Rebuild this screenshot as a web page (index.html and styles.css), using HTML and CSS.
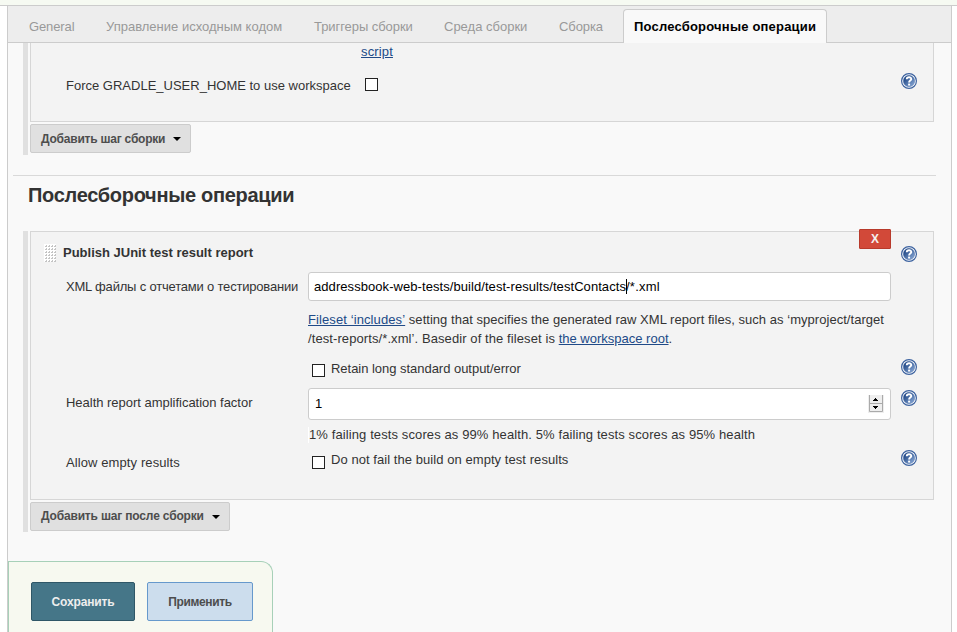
FILE: index.html
```html
<!DOCTYPE html>
<html lang="ru">
<head>
<meta charset="utf-8">
<title>Послесборочные операции</title>
<link rel="stylesheet" href="styles.css">
</head>
<body>
<svg class="defs" width="0" height="0">
  <defs>
    <linearGradient id="blue" x1="0" y1="0" x2="1" y2="1">
      <stop offset="0.2" stop-color="#234a88"/><stop offset="0.9" stop-color="#86a6d4"/>
    </linearGradient>
    <symbol id="help" viewBox="0 0 16 16">
      <circle cx="8" cy="8" r="7.4" fill="#fff" stroke="#3c629f" stroke-width="1.2"/>
      <circle cx="8" cy="8" r="5.7" fill="url(#blue)" stroke="#3c629f" stroke-width=".4"/>
      <path d="M5.7 6.2C5.8 3.5 10.4 3.6 10.3 6.1C10.2 7.6 8.1 7.7 8.1 9.5" fill="none" stroke="#fff" stroke-width="1.9"/>
      <rect x="7.1" y="10.6" width="2" height="1.9" fill="#fff"/>
    </symbol>
  </defs>
</svg>
<div class="page">
  <div class="strip"></div>
  <div class="panel">
    <nav class="tabs">
      <a class="tab t1"><span>General</span></a>
      <a class="tab t2"><span>Управление исходным кодом</span></a>
      <a class="tab t3"><span>Триггеры сборки</span></a>
      <a class="tab t4"><span>Среда сборки</span></a>
      <a class="tab t5"><span>Сборка</span></a>
      <a class="tab active"><span>Послесборочные операции</span></a>
    </nav>
    <section class="steps">
      <div class="box build">
        <div class="script-row"><a class="link script">script</a></div>
        <div class="row force-row">
          <span class="label force">Force GRADLE_USER_HOME to use workspace</span>
          <span class="check"></span>
          <svg class="help"><use href="#help"/></svg>
        </div>
      </div>
      <button class="add add-build"><span>Добавить шаг сборки</span><i class="caret"></i></button>
    </section>
    <h2><span>Послесборочные операции</span></h2>
    <section class="steps post-steps">
      <div class="box post">
        <button class="delete">X</button>
        <div class="row title-row">
          <svg class="grip" viewBox="0 0 12 18"><defs><pattern id="dots" width="3" height="3" patternUnits="userSpaceOnUse"><rect width="3" height="3" fill="#fff"/><path d="M1 2h1v-1h1v2h-2z" fill="#c4c4c4"/></pattern></defs><rect width="12" height="18" fill="url(#dots)"/></svg>
          <strong class="title">Publish JUnit test result report</strong>
          <svg class="help"><use href="#help"/></svg>
        </div>
        <div class="row xml-row">
          <span class="label xml">XML файлы с отчетами о тестировании</span>
          <div class="field path"><span class="p1">addressbook-web-tests/build/test-results/testContacts</span><i class="cursor"></i><span class="p2">/*.xml</span></div>
        </div>
        <div class="note">
          <div class="n1"><a class="link">Fileset ‘includes’</a> setting that specifies the generated raw XML report files, such as ‘myproject/target</div>
          <div class="n2">/test-reports/*.xml’. Basedir of the fileset is <a class="link">the workspace root</a>.</div>
        </div>
        <div class="row retain-row">
          <span class="label"></span>
          <span class="check"></span>
          <span class="option retain">Retain long standard output/error</span>
          <svg class="help"><use href="#help"/></svg>
        </div>
        <div class="row factor-row">
          <span class="label health">Health report amplification factor</span>
          <div class="field number"><span>1</span>
            <svg class="spinner" viewBox="0 0 16 18"><rect width="16" height="18" fill="#eee"/><path d="M1.5 0v16.5h13V0M1 8.5h14" fill="none" stroke="#aaa"/><path d="M5 6h5v-1h-1v-1h-1v-1h-1v1h-1v1h-1z M5 11h5v1h-1v1h-1v1h-1v-1h-1v-1h-1z" fill="#000"/></svg>
          </div>
          <svg class="help"><use href="#help"/></svg>
        </div>
        <div class="scores"><span>1% failing tests scores as 99% health. 5% failing tests scores as 95% health</span></div>
        <div class="row empty-row">
          <span class="label allow">Allow empty results</span>
          <span class="check"></span>
          <span class="option nofail">Do not fail the build on empty test results</span>
          <svg class="help"><use href="#help"/></svg>
        </div>
      </div>
      <button class="add add-post"><span>Добавить шаг после сборки</span><i class="caret"></i></button>
    </section>
    <footer class="actions">
      <button class="save">Сохранить</button>
      <button class="apply">Применить</button>
    </footer>
  </div>
</div>
</body>
</html>
```
FILE: styles.css
```css
* { box-sizing: border-box; }
body { margin: 0; background: #fff; color: #333; font: 13px/19px "Liberation Sans", Arial, sans-serif; overflow: hidden; }
button { font: bold 12px/15px "Liberation Sans", Arial, sans-serif; padding: 0; margin: 0; }
.defs { position: absolute; }
.page { height: 632px; display: flex; flex-direction: column; }
.strip { height: 6px; background: #f6faf2; border-bottom: 1px solid #ccc; flex: none; }
.panel { margin-left: 7px; width: 945px; height: 626px; background: #f9f9f9; border: solid #ccc; border-width: 0 1px; display: flex; flex-direction: column; }
.tabs { height: 37px; flex: none; background: #ededed; border-bottom: 1px solid #ccc; display: flex; padding-top: 3px; }
.tab { height: 33px; line-height: 35px; color: #999; white-space: nowrap; flex: none; }
.t1 { margin-left: 21px; width: 77px; letter-spacing: -.12px; }
.t2 { width: 208px; }
.t3 { width: 130px; letter-spacing: -.06px; }
.t4 { width: 115px; }
.t5 { width: 64px; letter-spacing: -.1px; }
.active { width: 204px; height: 34px; line-height: 33px; padding-left: 10px; background: #f9f9f9; border: 1px solid #ccc; border-bottom: 0; border-radius: 4px 4px 0 0; color: #000; font-weight: bold; letter-spacing: .2px; }
.steps { margin-left: 15px; border-left: 5px solid #e0e0e0; padding: 0 0 2px 2px; width: 911px; flex: none; }
.post-steps { padding-bottom: 1px; }
.box { position: relative; width: 904px; background: #f3f3f3; border: 1px solid #d6d6d6; }
.build { height: 79px; border-top: 0; }
.post { height: 269px; }
.row { display: flex; align-items: flex-start; }
.script-row { padding: 0 0 0 330px; height: 25px; line-height: 17px; letter-spacing: .15px; }
.link { color: #204a87; text-decoration: underline; }
.label { margin-left: 35px; width: 242px; flex: none; white-space: nowrap; }
.force { width: 299px; margin-top: 8px; }
.check { width: 13px; height: 13px; border: 1px solid #222; background: #fff; flex: none; }
.force-row .check { margin-top: 10px; }
.help { width: 16px; height: 16px; margin-left: auto; margin-right: 16px; flex: none; }
.force-row .help { margin-top: 5px; }
.add { display: flex; align-items: center; height: 29px; margin-top: 2px; background: #e0e0e0; border: 1px solid #ccc; border-radius: 2px; color: #4d4d4d; padding-left: 10px; white-space: nowrap; }
.add-build { width: 161px; letter-spacing: -.22px; }
.add-build span { padding-top: 1px; }
.add-post { width: 200px; letter-spacing: -.17px; }
.add span { flex: 1; text-align: left; }
.caret { border: 4px solid transparent; border-top-color: #000; border-bottom: 0; margin: 1px 9px 0 0; }
h2 { margin: 20px 15px 26px 5px; padding: 8px 0 0 15px; height: 30px; border-top: 1px solid #d9d9d9; font-size: 20px; line-height: 22px; letter-spacing: -.3px; flex: none; }
.delete { position: absolute; left: 828px; top: -3px; width: 32px; height: 20px; background: #d24939; border: 1px solid #b83a2b; border-radius: 1px; color: #f5f0ee; }
.title-row { height: 40px; padding-top: 11px; }
.grip { width: 12px; height: 18px; margin: 1px 7px 0 13px; }
.title-row .help { margin-top: 3px; }
.xml-row { height: 29px; }
.xml { margin-top: 5px; letter-spacing: -.19px; }
.field { width: 583px; background: #fff; border: 1px solid #ccc; border-radius: 3px; color: #000; display: flex; align-items: center; white-space: nowrap; }
.path { height: 29px; padding-left: 5px; }
.p1 { letter-spacing: .065px; }
.p2 { letter-spacing: .25px; }
.cursor { width: 1px; height: 15px; background: #000; margin-right: -1px; }
.note { padding: 9px 0 0 277px; height: 47px; white-space: nowrap; }
.n1 { letter-spacing: .036px; }
.n2 { letter-spacing: .09px; }
.n1 .link { letter-spacing: .1px; }
.n2 .link { letter-spacing: 0; }
.retain { letter-spacing: -.03px; }
.retain-row { height: 40px; padding-top: 11px; }
.retain-row .check { margin: 5px 0 0 4px; }
.option { margin-left: 6px; white-space: nowrap; }
.retain-row .help, .factor-row .help { margin-top: 0; }
.factor-row { height: 32px; }
.health { margin-top: 5px; letter-spacing: -.02px; }
.number { height: 32px; padding: 0 6px; justify-content: space-between; }
.number span { padding-bottom: 2px; }
.number + .help { margin-top: 2px; }
.spinner { width: 16px; height: 18px; margin-right: 0; }
.scores { height: 29px; padding: 7px 0 0 277px; line-height: 16px; white-space: nowrap; letter-spacing: .107px; }
.scores span { display: inline-block; border-left: 1px solid #fff; }
.allow { margin-top: 3px; letter-spacing: .1px; }
.empty-row { padding-top: 1px; }
.empty-row .check { margin: 6px 0 0 4px; }
.empty-row .option { margin-top: 0; letter-spacing: .06px; }
.actions { margin-top: 29px; width: 265px; height: 72px; flex: none; background: #f7f9f0; border: solid #a7d0b8; border-width: 1px 1px 0 1px; border-radius: 0 12px 0 0; padding: 20px 0 0 22px; display: flex; gap: 12px; }
.save { width: 104px; height: 39px; background: #457688; border: 1px solid #2f5767; border-radius: 2px; color: #eee; padding-top: 1px; letter-spacing: -.15px; }
.apply { width: 106px; height: 39px; background: #ccdded; border: 1px solid #6699cc; border-radius: 2px; color: #4d4d4d; padding-top: 1px; letter-spacing: -.35px; }
```
